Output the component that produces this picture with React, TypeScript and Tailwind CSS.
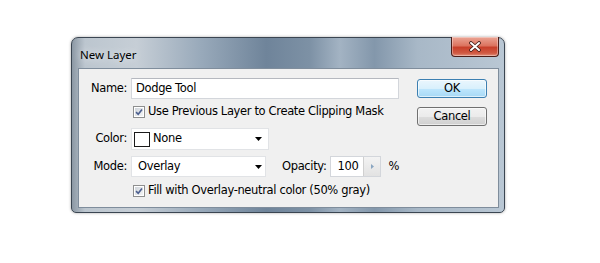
import React from 'react';

const CheckBox: React.FC = () => (
  <span className="flex h-[12px] w-[12px] shrink-0 items-center justify-center border border-[#8e8f8f] bg-white">
    <span className="flex h-[8px] w-[8px] items-center justify-center bg-[linear-gradient(135deg,#cfd4da,#f4f5f6)]">
      <svg width="8" height="8" viewBox="0 0 9 9">
        <path d="M1.2 4.6 L3.6 7 L7.9 1.6" fill="none" stroke="#4c5f8f" strokeWidth="1.8" />
      </svg>
    </span>
  </span>
);

const DownArrow: React.FC = () => (
  <svg width="7" height="4" viewBox="0 0 7 4" className="shrink-0">
    <path d="M0 0 H7 L3.5 4 Z" fill="#000" />
  </svg>
);

const Label: React.FC<{ children: React.ReactNode }> = ({ children }) => (
  <span className="mr-[4px] w-[48px] shrink-0 text-right">{children}</span>
);

export default function App() {
  return (
    <div className="h-[263px] w-[600px] bg-white pl-[71px] pt-[37px] font-['DejaVu_Sans',sans-serif] text-[11.5px] tracking-[-0.35px] text-black">
      <div className="flex h-[176px] w-[434px] flex-col rounded-t-[7px] rounded-b-[5px] border border-[#3b4652] bg-[linear-gradient(90deg,#8c98a4_0%,#bcc6cf_3%,#c6ced6_15%,#98a9ba_30%,#6f849a_45%,#7d91a5_55%,#a3b3c3_62%,#8397ab_70%,#a8b8c7_80%,#b9c7d4_100%)] pb-[4px] pl-[6px] pr-[5px] shadow-[0_0_3px_rgba(0,0,0,0.35)]">
        {/* title bar */}
        <div className="flex h-[30px] items-start justify-between">
          <span className="pl-[2px] pt-[8px] font-['Noto_Sans',sans-serif] text-[11.5px] tracking-normal text-black [text-shadow:0_0_8px_rgba(255,255,255,0.9)]">
            New Layer
          </span>
          <div className="-mt-[1px] flex h-[20px] w-[48px] items-center justify-center rounded-b-[4px] border border-t-0 border-[#4a1d18] bg-[linear-gradient(180deg,#eba595_0%,#dc7460_45%,#c8402b_55%,#d05a43_85%,#e2907c_100%)] shadow-[inset_0_0_0_1px_rgba(255,255,255,0.35)]">
            <svg width="14" height="11" viewBox="0 0 14 11">
              <path d="M3 2 L11 9 M11 2 L3 9" stroke="#3c1a16" strokeWidth="3.6" strokeLinecap="round" />
              <path d="M3 2 L11 9 M11 2 L3 9" stroke="#fff" strokeWidth="2" strokeLinecap="round" />
            </svg>
          </div>
        </div>

        {/* client area */}
        <div className="flex flex-1 border border-[#7f8d9c] bg-[#f0f0f0]">
          <div className="flex flex-1 flex-col pt-[9px]">
            <div className="flex h-[21px] items-center">
              <Label>Name:</Label>
              <div className="flex h-[21px] w-[268px] items-center border border-[#d3d6db] border-t-[#b5b8bf] bg-white pl-[4px]">
                Dodge Tool
              </div>
            </div>

            <div className="mt-[6px] flex h-[14px] items-center pl-[54px]">
              <CheckBox />
              <span className="ml-[3px]">Use Previous Layer to Create Clipping Mask</span>
            </div>

            <div className="mt-[9px] flex h-[22px] items-center">
              <Label>Color:</Label>
              <div className="flex h-[22px] w-[138px] items-center border border-[#e1e3e6] bg-white pl-[2px] pr-[6px]">
                <span className="h-[15px] w-[16px] border border-[#1a1a1a] bg-white" />
                <span className="ml-[3px] flex-1">None</span>
                <DownArrow />
              </div>
            </div>

            <div className="mt-[6px] flex h-[21px] items-center">
              <Label>Mode:</Label>
              <div className="flex h-[21px] w-[135px] items-center border border-[#e1e3e6] bg-white pl-[6px] pr-[3px]">
                <span className="flex-1">Overlay</span>
                <DownArrow />
              </div>
              <span className="ml-[16px]">Opacity:</span>
              <div className="ml-[4px] flex h-[21px] items-stretch border border-[#d3d6db] bg-white">
                <span className="flex w-[32px] items-center pl-[6px]">100</span>
                <span className="flex w-[17px] items-center justify-center border-l border-[#d0d0d0] bg-[linear-gradient(180deg,#f3f3f3,#e2e2e2)]">
                  <svg width="3" height="5" viewBox="0 0 3 5">
                    <path d="M0 0 L3 2.5 L0 5 Z" fill="#8aa6c1" />
                  </svg>
                </span>
              </div>
              <span className="ml-[7px]">%</span>
            </div>

            <div className="mt-[7px] flex h-[14px] items-center pl-[54px]">
              <CheckBox />
              <span className="ml-[3px]">Fill with Overlay-neutral color (50% gray)</span>
            </div>
          </div>

          <div className="mr-[11px] flex flex-col pt-[10px]">
            <div className="flex h-[19px] w-[70px] items-center justify-center rounded-[3px] border border-[#3c7fb1] bg-[linear-gradient(180deg,#eaf6fd_0%,#d9f0fc_50%,#bee6fd_51%,#a7d9f5_100%)] shadow-[inset_0_0_0_1px_rgba(255,255,255,0.6)]">
              OK
            </div>
            <div className="mt-[9px] flex h-[19px] w-[70px] items-center justify-center rounded-[3px] border border-[#707070] bg-[linear-gradient(180deg,#f2f2f2_0%,#ebebeb_50%,#dddddd_51%,#cfcfcf_100%)] shadow-[inset_0_0_0_1px_rgba(255,255,255,0.6)]">
              Cancel
            </div>
          </div>
        </div>
      </div>
    </div>
  );
}
